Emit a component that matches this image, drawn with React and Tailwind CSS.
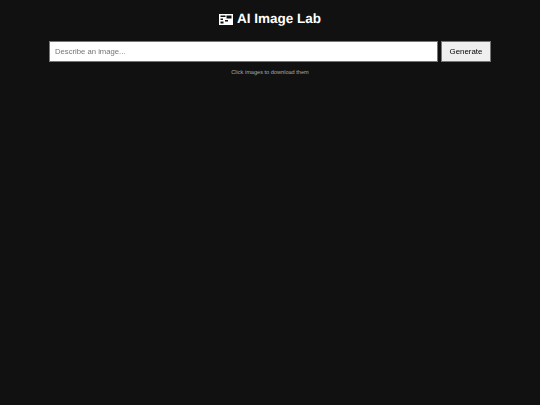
const FrameIcon = () => (
  <svg viewBox="0 0 14 11" className="h-[11px] w-[14px]" aria-hidden="true">
    <rect width="14" height="11" fill="#ffffff" />
    <rect x="1.5" y="1.5" width="5" height="1.5" fill="#111111" />
    <rect x="7.5" y="1.5" width="5" height="3" fill="#111111" />
    <rect x="1.5" y="4.5" width="2.5" height="1.5" fill="#111111" />
    <rect x="1.5" y="7.5" width="3" height="2" fill="#111111" />
    <rect x="6" y="6" width="3" height="1.5" fill="#111111" />
  </svg>
);

export default function App() {
  return (
    <div className="min-h-[405px] bg-[#111111] pt-[10px] font-['Liberation_Sans',Arial,sans-serif] text-white antialiased [text-rendering:geometricPrecision]">
      <h1 className="flex items-center justify-center gap-[4px] text-[13.5px] leading-[18px] font-bold">
        <FrameIcon />
        <span>AI Image Lab</span>
      </h1>
      <div className="mx-auto mt-[13px] flex w-[442px] gap-[3px] [will-change:transform]">
        <input
          type="text"
          placeholder="Describe an image..."
          className="h-[21px] flex-1 border border-[#767676] bg-white px-[5px] text-[7.7px] text-black outline-none placeholder:text-[#757575]"
        />
        <button className="h-[21px] w-[50px] border border-[#767676] bg-[#efefef] text-[7.9px] text-black">Generate</button>
      </div>
      <p className="mt-[7px] text-center text-[5.6px] leading-[8px] text-[#aaaaaa]">Click images to download them</p>
    </div>
  );
}
